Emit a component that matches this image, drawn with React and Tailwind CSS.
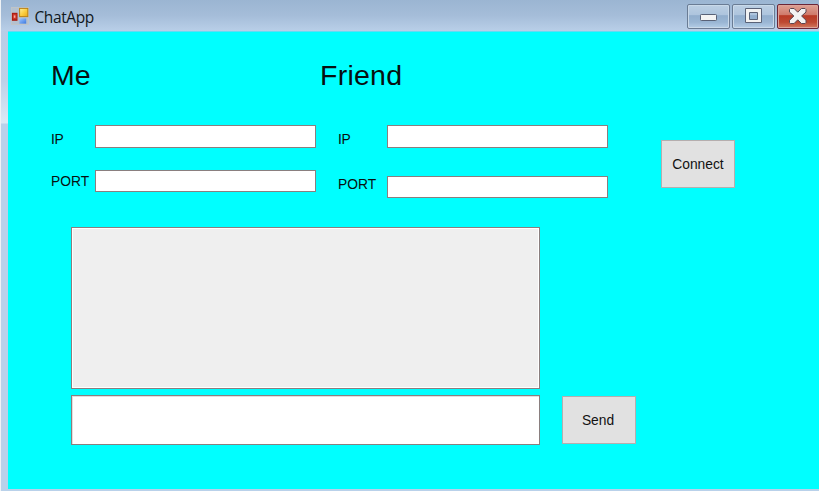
import React from 'react';

function AppIcon() {
  return (
    <svg className="h-[18px] w-[18px] shrink-0" viewBox="0 0 18 18">
      <defs>
        <linearGradient id="gold" x1="0" y1="0" x2="1" y2="1">
          <stop offset="0" stopColor="#fff0a0" />
          <stop offset="0.5" stopColor="#fbd043" />
          <stop offset="1" stopColor="#e9a818" />
        </linearGradient>
        <linearGradient id="blue" x1="0" y1="0" x2="1" y2="1">
          <stop offset="0" stopColor="#9cc6ff" />
          <stop offset="1" stopColor="#3b78e0" />
        </linearGradient>
      </defs>
      <rect x="0.5" y="0.5" width="17" height="17" fill="#b4c1cf" stroke="#bfc4c8" />
      <rect x="0.9" y="5.8" width="5.6" height="8" fill="#a51a10" />
      <rect x="1.8" y="6.8" width="3.8" height="5.6" fill="#cc3527" />
      <rect x="2.8" y="8.4" width="1.6" height="2.4" fill="#f9a99c" />
      <rect x="8.6" y="1.4" width="8.2" height="8.2" fill="url(#gold)" stroke="#bd8313" strokeWidth="1" />
      <rect x="8.4" y="11.4" width="6.8" height="5.2" fill="url(#blue)" />
    </svg>
  );
}

function CaptionButton({ label, danger, children }) {
  const tone = danger
    ? 'w-[42px] border-[#6b2637] bg-[linear-gradient(#dea194_0%,#cf796a_44%,#b93a26_46%,#bd4932_75%,#d27b60_100%)] shadow-[inset_0_0_0_1px_#dda399]'
    : 'w-[43px] border-[#6a7c94] bg-[linear-gradient(#bccfe3_0%,#adc4dd_44%,#91aecd_46%,#9ab6d4_75%,#b4cde6_100%)] shadow-[inset_0_0_0_1px_#c9d9e9]';
  return (
    <button aria-label={label} className={`flex h-[25px] shrink-0 items-center justify-center rounded-[2px] border ${tone}`}>
      {children}
    </button>
  );
}

function TitleBar() {
  return (
    <header className="flex h-[31px] shrink-0 items-start overflow-hidden bg-[linear-gradient(#9bb5d2,#a5bdd9_50%,#b9cfe8)] pl-[10px]">
      <div className="flex pt-[7px]">
        <AppIcon />
        <span className="ml-[5.5px] font-['Open_Sans','Noto_Sans',sans-serif] text-[15.5px] leading-5 tracking-[-0.4px] text-[#101820]">ChatApp</span>
      </div>
      <div className="ml-auto flex gap-[2px] pt-1">
        <CaptionButton label="Minimize">
          <svg className="h-[19px] w-[19px]" viewBox="0 0 19 19">
            <rect x="1.5" y="7.5" width="16" height="6" rx="0.8" fill="#f4f4f4" stroke="#596277" />
          </svg>
        </CaptionButton>
        <CaptionButton label="Maximize">
          <svg className="h-[19px] w-[19px]" viewBox="0 0 19 19">
            <path d="M1.5 1.5h16v14h-16z M5.5 5.5v7h8v-7z" fill="#f2f2f2" fillRule="evenodd" stroke="#596277" />
          </svg>
        </CaptionButton>
        <CaptionButton label="Close" danger>
          <svg className="mr-px h-[19px] w-[19px]" viewBox="0 0 19 19">
            <path d="M2.5 1.5h3.6L9.75 5.2l3.65-3.7H17l1 1v2.6L13.6 9l4.4 4.2v2.3l-1 1h-3.6l-3.65-3.7-3.65 3.7H2.5l-1-1v-2.3L5.9 9 1.5 5.1V2.5z" fill="#f4f3f3" stroke="#594651" strokeLinejoin="round" />
          </svg>
        </CaptionButton>
      </div>
    </header>
  );
}

function Field({ label, className }) {
  return <input aria-label={label} className={`block w-[221px] border border-[#8a7f7f] bg-white px-1 outline-none ${className}`} />;
}

function ActionButton({ children, className }) {
  return (
    <button className={`w-[74px] shrink-0 border border-[#b5aeae] bg-[#e1e1e1] pt-px text-center text-[#111] ${className}`}>
      {children}
    </button>
  );
}

function MePanel() {
  return (
    <section className="w-[269px] shrink-0">
      <h2 className="h-[94px] pt-[28px] text-[28.5px] leading-8">Me</h2>
      <div className="flex h-[45px]">
        <span className="w-[44px] pt-[7px] tracking-[-0.3px]">IP</span>
        <Field label="My IP" className="h-[23px]" />
      </div>
      <div className="flex">
        <span className="w-[44px] pt-[4px]">PORT</span>
        <Field label="My port" className="h-[22px]" />
      </div>
    </section>
  );
}

function FriendPanel() {
  return (
    <section className="w-[288px] shrink-0">
      <h2 className="h-[94px] pt-[28px] text-[28.5px] leading-8 tracking-[0.25px]">Friend</h2>
      <div className="pl-[18px]">
        <div className="flex h-[51px]">
          <span className="w-[49px] pt-[7px] tracking-[-0.3px]">IP</span>
          <Field label="Friend IP" className="h-[23px]" />
        </div>
        <div className="flex">
          <span className="w-[49px] pt-px">PORT</span>
          <Field label="Friend port" className="h-[22px]" />
        </div>
      </div>
    </section>
  );
}

export default function App() {
  return (
    <div className="flex h-[491px] w-[819px] overflow-hidden bg-[#b9d1ea] font-['Liberation_Sans',Arial,sans-serif] text-[13.8px] leading-4 text-[#081010]">
      <div className="w-px shrink-0 bg-[#eef2f5]" />
      <div className="flex w-[818px] shrink-0 flex-col">
        <TitleBar />
        <div className="flex flex-1">
          <div className="w-[7px] shrink-0 bg-[linear-gradient(#b8cde6_0px,#bdd1e8_50px,#dce9f5_92px,#b9d1ea_93px)]" />
          <main className="mb-[2px] flex-1 border-t border-[#62dcf2] bg-[#00ffff]">
            <div className="-mt-px flex h-[196px] pl-[43px]">
              <MePanel />
              <FriendPanel />
              <ActionButton className="ml-[53px] mt-[109px] h-[48px]">Connect</ActionButton>
            </div>
            <div className="pl-[63px]">
              <div className="h-[162px] w-[469px] border border-[#8a7f7f] bg-[#efefef] shadow-[inset_0_0_0_1px_#fff]" />
              <div className="mt-[6px] flex">
                <textarea aria-label="Message" className="block h-[50px] w-[469px] resize-none border border-[#8a7f7f] bg-white p-1 shadow-[inset_1px_1px_0_#e2dede] outline-none" />
                <ActionButton className="ml-[22px] mt-px h-[48px] pr-[2px]">Send</ActionButton>
              </div>
            </div>
          </main>
        </div>
      </div>
    </div>
  );
}
